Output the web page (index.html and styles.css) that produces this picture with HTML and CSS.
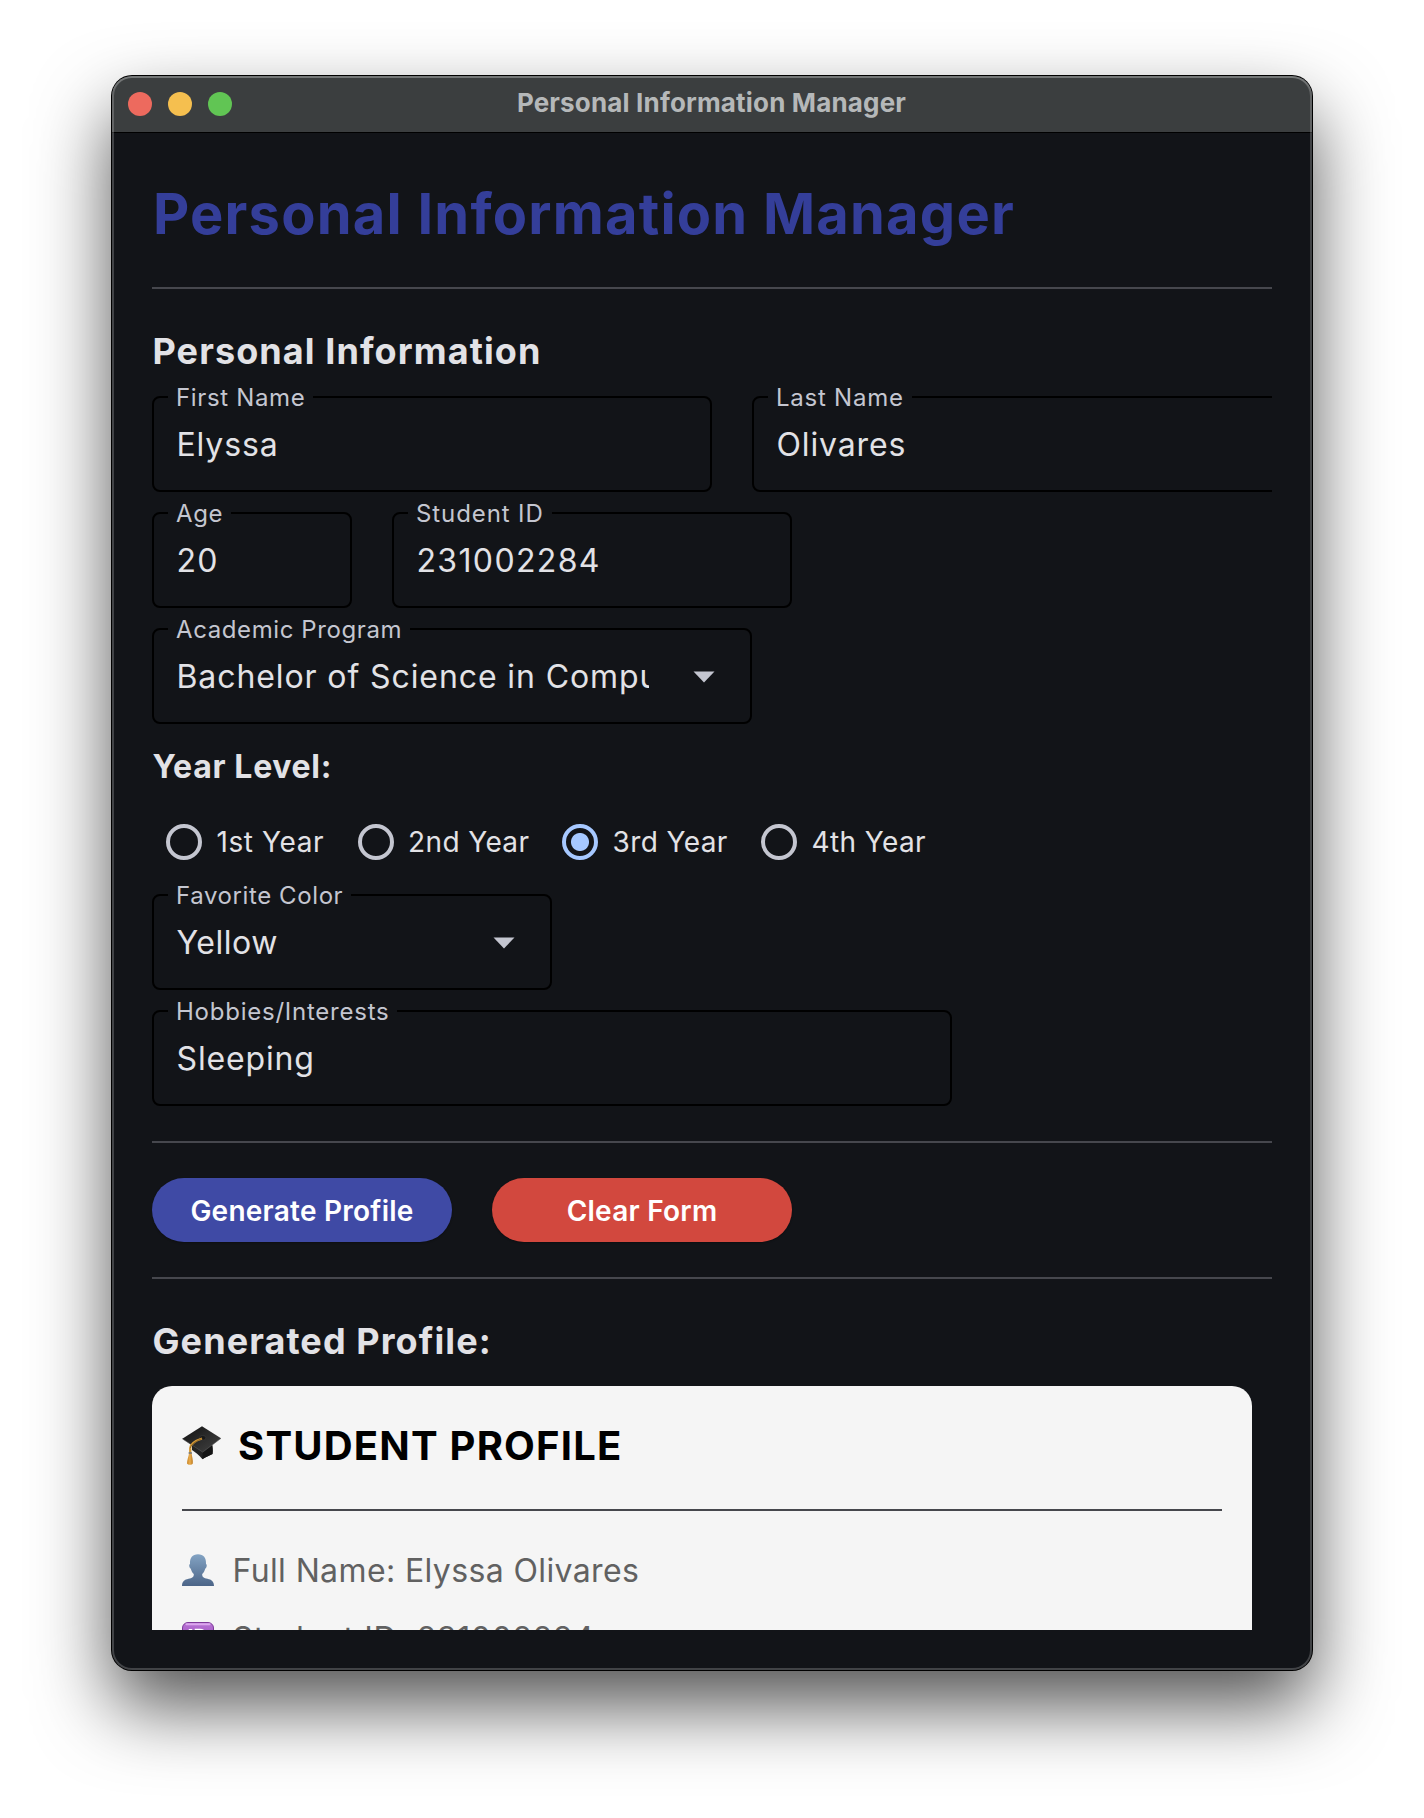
FILE: index.html
```
<!DOCTYPE html>
<html lang="en">
<head>
<meta charset="utf-8">
<title>Personal Information Manager</title>
<link rel="stylesheet" href="styles.css">
</head>
<body>
<div class="window">
  <header class="titlebar">
    <div class="lights"><span class="light close"></span><span class="light minimize"></span><span class="light zoom"></span></div>
    <div class="window-title">Personal Information Manager</div>
  </header>
  <main class="content">
    <div class="viewport">
      <h1>Personal Information Manager</h1>
      <hr class="rule rule-title">
      <h2>Personal Information</h2>
      <form class="form">
        <div class="row">
          <div class="field w560"><span class="label first-name">First Name</span><span class="value">Elyssa</span></div>
          <div class="field w560"><span class="label">Last Name</span><span class="value">Olivares</span></div>
        </div>
        <div class="row">
          <div class="field w200"><span class="label narrow">Age</span><span class="value digits">20</span></div>
          <div class="field w400"><span class="label wide">Student ID</span><span class="value digits">231002284</span></div>
        </div>
        <div class="field w600">
          <span class="label narrow">Academic Program</span>
          <span class="value program">Bachelor of Science in Computer Science</span>
          <svg class="arrow" width="22" height="12" viewBox="0 0 22 12"><path d="M0.5 0.5h21L11 11.5z"/></svg>
        </div>
        <div class="year">
          <h3>Year Level:</h3>
          <div class="radios">
            <div class="radio first"><span class="ring"></span>1st Year</div>
            <div class="radio"><span class="ring"></span>2nd Year</div>
            <div class="radio"><span class="ring selected"></span>3rd Year</div>
            <div class="radio"><span class="ring"></span>4th Year</div>
          </div>
        </div>
        <div class="field w400">
          <span class="label narrow">Favorite Color</span>
          <span class="value color">Yellow</span>
          <svg class="arrow" width="22" height="12" viewBox="0 0 22 12"><path d="M0.5 0.5h21L11 11.5z"/></svg>
        </div>
        <div class="field w800"><span class="label">Hobbies/Interests</span><span class="value">Sleeping</span></div>
      </form>
      <hr class="rule">
      <div class="row actions">
        <button class="button primary" type="button">Generate Profile</button>
        <button class="button danger" type="button">Clear Form</button>
      </div>
      <hr class="rule rule-profile">
      <h2>Generated Profile:</h2>
      <section class="card">
        <div class="card-title">
          <svg width="40" height="40" viewBox="0 0 40 40">
            <defs>
              <linearGradient id="board" x1="0" y1="0" x2="1" y2="1"><stop offset="0" stop-color="#111"/><stop offset=".6" stop-color="#303030"/><stop offset="1" stop-color="#444"/></linearGradient>
              <linearGradient id="tassel" x1="0" y1="0" x2="1" y2="0"><stop offset="0" stop-color="#c98426"/><stop offset=".5" stop-color="#e9ac4c"/><stop offset="1" stop-color="#bd7a20"/></linearGradient>
            </defs>
            <path d="M10 17v7c3 2 7 5 10.500 9.200C24 30.500 28 29.500 30.500 28c1-4 0-8-1.500-11z" fill="#242424"/>
            <path d="M20.500 25v8C24 30.500 28 29.500 30.500 28V19z" fill="#151515"/>
            <path d="M20 0.300 39 12.300 20.700 26.500 0.300 12.800z" fill="url(#board)"/>
            <path d="M0.300 12.800 20.700 26 39 12.300" fill="none" stroke="#555" stroke-width=".6"/>
            <ellipse cx="20.700" cy="11.800" rx="3.200" ry="2.400" fill="#191919" stroke="#444" stroke-width=".5"/>
            <path d="M20 12.500C14 14.500 8.600 18 8.200 22v6" fill="none" stroke="#d59a36" stroke-width="2.300"/>
            <path d="M19.500 12.800C14 15 9 18.500 8.400 22" fill="none" stroke="#4c3514" stroke-width=".5"/>
            <path d="M7.100 27h2.400c.5 3.500 1.700 7 1.300 10.500-.6 1.700-5 1.700-5.800 0C5 34 6.600 30.500 7.100 27z" fill="url(#tassel)"/>
            <path d="M6.600 27h3.300" stroke="#777" stroke-width="1.600"/>
          </svg>
          STUDENT PROFILE
        </div>
        <hr class="rule rule-card">
        <div class="card-line full-name">
          <svg width="32" height="32" viewBox="0 0 32 32">
            <defs><linearGradient id="person" x1="0" y1="0" x2="0" y2="1"><stop offset="0" stop-color="#83a3c3"/><stop offset="1" stop-color="#4c6588"/></linearGradient></defs>
            <path d="M16 .3c5.600 0 8.300 3.500 8 9.700 1.400.6.700 4-.8 4.700-.6 2.300-1.500 4-3 5.300-.2 3 1.600 4 5.300 4.800C29.500 25.700 32 27.500 32 32H0c0-4.500 2.500-6.300 6.500-7.200 3.700-.8 5.500-1.800 5.300-4.800-1.500-1.300-2.400-3-3-5.300-1.500-.7-2.200-4.100-.8-4.700C7.700 3.800 10.400.3 16 .3z" fill="url(#person)"/>
          </svg>
          Full Name: Elyssa Olivares
        </div>
        <div class="card-line student-id">
          <svg width="32" height="32" viewBox="0 0 32 32">
            <defs><linearGradient id="badge" x1="0" y1="0" x2="0" y2="1"><stop offset="0" stop-color="#b873d4"/><stop offset="1" stop-color="#8a3bb0"/></linearGradient></defs>
            <rect x=".5" y=".5" width="31" height="31" rx="5.500" fill="url(#badge)" stroke="#7d3a99"/>
            <path d="M4.500 2.300h23" stroke="#dca6ee" stroke-width="2" stroke-linecap="round"/>
            <path d="M8.500 7v18M14.500 8.500v15h3.500c8 0 8-15 0-15z" fill="none" stroke="#fff" stroke-width="3.500"/>
          </svg>
          Student ID: 231002284
        </div>
      </section>
    </div>
  </main>
</div>
</body>
</html>
```
FILE: styles.css
```
* { box-sizing: border-box; }

body {
  margin: 0;
  min-height: 1818px;
  padding: 76px 112px 148px;
  background: #fff;
  color: #e2e2e6;
  font-family: Inter, "Liberation Sans", sans-serif;
  white-space: nowrap;
}

h1, h2, h3, hr { margin: 0; border: 0; }

.window {
  position: relative;
  display: flex;
  flex-direction: column;
  width: 1200px;
  height: 1594px;
  border-radius: 20px;
  background: #121418;
  box-shadow: 0 0 0 1px #000, 0 36px 76px rgba(0, 0, 0, .68);
}

/* light inner edge drawn over the title bar and the content */
.window::after {
  content: "";
  position: absolute;
  inset: 0;
  border-radius: 20px;
  box-shadow: inset 0 0 0 2px rgba(255, 255, 255, .2), inset 0 2px 0 rgba(255, 255, 255, .12);
  pointer-events: none;
}

.titlebar {
  display: grid;
  grid-template-columns: 1fr auto 1fr;
  align-items: center;
  height: 57px;
  padding: 0 17px 0 16px;
  border-bottom: 1px solid #000;
  border-radius: 20px 20px 0 0;
  background: #3b3e3f;
}

.lights { display: flex; gap: 16px; }
.light { width: 24px; height: 24px; border-radius: 50%; }
.close { background: #ed6a5e; }
.minimize { background: #f5bf4f; }
.zoom { background: #61c554; }

.window-title {
  padding-bottom: 3px;
  color: #b5b8b9;
  font-size: 26px;
  font-weight: 700;
  line-height: 32px;
  letter-spacing: .17px;
}

.content { flex: 1; min-height: 0; padding: 39px 40px 40px; }
.viewport { height: 100%; overflow: hidden; }

h1 {
  padding-left: 1px;
  color: #343e99;
  font-size: 56px;
  font-weight: 700;
  line-height: 84px;
  letter-spacing: 1.21px;
}

h2 { padding-left: .5px; font-size: 36px; font-weight: 700; line-height: 50px; letter-spacing: 1.09px; }
h3 { padding: 1px 0 0 .5px; font-size: 32px; font-weight: 700; line-height: 44px; letter-spacing: .68px; }

.rule { height: 2px; margin: 35px 0; background: #46474d; }
.rule-title { margin: 31px 0 37px; }
.rule-profile { margin-bottom: 37px; }

.form { display: flex; flex-direction: column; gap: 20px; margin-top: 20px; }
.row { display: flex; gap: 40px; }

.field {
  position: relative;
  display: flex;
  flex-shrink: 0;
  align-items: center;
  justify-content: space-between;
  height: 96px;
  padding: 0 35px 0 22.5px;
  border: 2px solid #000;
  border-radius: 8px;
}

.w200 { width: 200px; }
.w400 { width: 400px; }
.w560 { width: 560px; }
.w600 { width: 600px; }
.w800 { width: 800px; }

/* label sits over the top border */
.label {
  position: absolute;
  top: -14px;
  left: 14px;
  padding: 0 8px;
  background: #121418;
  color: #c4c6d0;
  font-size: 24px;
  line-height: 28px;
  letter-spacing: .76px;
}

.label.wide { letter-spacing: .9px; }
.label.first-name { letter-spacing: .65px; }
.label.narrow { letter-spacing: .6px; }

.value { padding-top: 2px; font-size: 32px; line-height: 44px; letter-spacing: .86px; }
.value.digits { letter-spacing: 1.35px; }
.value.program { width: 472px; overflow: hidden; letter-spacing: .9px; }
.value.color { letter-spacing: .55px; }

.arrow { margin-top: 1px; fill: #c4c6d0; }

.radios {
  display: grid;
  grid-template-columns: 191.5px 204.500px 199px auto;
  align-items: center;
  height: 66px;
  margin-top: 19px;
  padding: 2px 0 0 14px;
}

.year { height: 130px; }

.radio {
  display: flex;
  align-items: center;
  gap: 14.5px;
  font-size: 28px;
  line-height: 36px;
  letter-spacing: .38px;
}

.radio.first { letter-spacing: .6px; }

.ring { width: 36px; height: 36px; border: 4px solid #c4c6d0; border-radius: 50%; }

.ring.selected {
  border-color: #a6c8ff;
  background: radial-gradient(circle, #a6c8ff 8.500px, transparent 9.500px);
}

.button {
  width: 300px;
  height: 64px;
  padding: 1px 0 0;
  border: 0;
  border-radius: 32px;
  color: #fff;
  font: 600 28px/40px Inter, "Liberation Sans", sans-serif;
  letter-spacing: .25px;
  box-shadow: 0 1px 2px rgba(0, 0, 0, .3);
}

.primary { background: #3f4aa5; }
.danger { background: #d2483e; }

.card {
  width: 1100px;
  height: 420px;
  margin-top: 20px;
  padding: 30px;
  border-radius: 20px;
  background: #f5f5f5;
}

.card-title {
  display: flex;
  align-items: center;
  gap: 16px;
  color: #000;
  font-size: 40px;
  font-weight: 700;
  line-height: 60px;
  letter-spacing: 1.19px;
}

.rule-card { margin: 33px 0 35px; }

.card-line {
  display: flex;
  align-items: center;
  gap: 18.5px;
  height: 50px;
  margin-bottom: 18px;
  color: #616161;
  font-size: 32px;
  line-height: 50px;
}

.card-line svg { margin-bottom: 2px; }

.full-name { letter-spacing: .38px; }
.student-id { letter-spacing: .64px; }
```
